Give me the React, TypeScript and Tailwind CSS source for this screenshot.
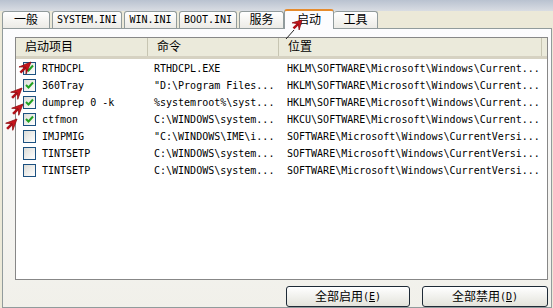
import React from 'react';

const rows = [
  { name: 'RTHDCPL', cmd: 'RTHDCPL.EXE', loc: 'HKLM\\SOFTWARE\\Microsoft\\Windows\\Current...', on: true },
  { name: '360Tray', cmd: '"D:\\Program Files...', loc: 'HKLM\\SOFTWARE\\Microsoft\\Windows\\Current...', on: true },
  { name: 'dumprep 0 -k', cmd: '%systemroot%\\syst...', loc: 'HKLM\\SOFTWARE\\Microsoft\\Windows\\Current...', on: true },
  { name: 'ctfmon', cmd: 'C:\\WINDOWS\\system...', loc: 'HKCU\\SOFTWARE\\Microsoft\\Windows\\Current...', on: true },
  { name: 'IMJPMIG', cmd: '"C:\\WINDOWS\\IME\\i...', loc: 'SOFTWARE\\Microsoft\\Windows\\CurrentVersi...', on: false },
  { name: 'TINTSETP', cmd: 'C:\\WINDOWS\\system...', loc: 'SOFTWARE\\Microsoft\\Windows\\CurrentVersi...', on: false },
  { name: 'TINTSETP', cmd: 'C:\\WINDOWS\\system...', loc: 'SOFTWARE\\Microsoft\\Windows\\CurrentVersi...', on: false },
];

const tabs = [
  { label: '一般', w: 'w-[48px]', size: 'text-[12px]' },
  { label: 'SYSTEM.INI', w: 'w-[70px]', size: 'text-[10px]' },
  { label: 'WIN.INI', w: 'w-[53px]', size: 'text-[10px]' },
  { label: 'BOOT.INI', w: 'w-[58px]', size: 'text-[10px]' },
  { label: '服务', w: 'w-[45px]', size: 'text-[12px]' },
];

function CheckBox({ on }: { on: boolean }) {
  return (
    <div className="w-[13px] h-[13px] border border-[#1c5180] bg-gradient-to-br from-[#dcdcd7] to-white flex items-center justify-center shrink-0">
      {on && (
        <svg width="9" height="9" viewBox="0 0 9 9">
          <path d="M1 4 L3.5 6.5 L8 1.5" fill="none" stroke="#21a121" strokeWidth="2" />
        </svg>
      )}
    </div>
  );
}

// red annotation arrow, tip at (x,y), pointing up-right
function Arrow({ x, y, len = 11 }: { x: number; y: number; len?: number }) {
  const d = [-0.7071, 0.7071];
  const n = [0.7071, 0.7071];
  const p = (a: number, b: number) => `${x + d[0] * a + n[0] * b},${y + d[1] * a + n[1] * b}`;
  return (
    <g>
      <line x1={x + d[0] * len * 0.6} y1={y + d[1] * len * 0.6} x2={x + d[0] * (len + 3)} y2={y + d[1] * (len + 3)} stroke="#b01018" strokeWidth="2.5" />
      <polygon points={`${x},${y} ${p(len, 5)} ${p(len * 0.6, 0)} ${p(len, -5)}`} fill="#c8141c" stroke="#8e0c10" strokeWidth="0.8" />
    </g>
  );
}

export default function App() {
  return (
    <div className="relative w-[553px] h-[308px] overflow-hidden bg-[#ece9d8] text-black font-['DejaVu_Sans_Mono','Noto_Sans_CJK_SC',monospace] text-[10px]">
      <div className="h-[11px] bg-gradient-to-b from-[#b9c2d0] to-[#d9dde3]" />

      {/* tab strip */}
      <div className="flex items-end h-[17px] pl-[2px] bg-[#ece9d8]">
        {tabs.map((t) => (
          <div
            key={t.label}
            className={`${t.w} ${t.size} h-[17px] mr-[2px] border border-b-0 border-[#919b9c] rounded-t-[3px] bg-gradient-to-b from-white to-[#ecebe6] flex items-center justify-center leading-none whitespace-nowrap`}
          >
            {t.label}
          </div>
        ))}
        <div className="relative z-10 w-[50px] h-[20px] -mb-[1px] -ml-[2px] border border-b-0 border-[#919b9c] border-t-2 border-t-[#e68b2c] rounded-t-[3px] bg-[#fcfcfe] flex items-center justify-center text-[12px] leading-none">
          启动
        </div>
        <div className="w-[44px] h-[17px] border border-b-0 border-l-0 border-[#919b9c] rounded-t-[3px] bg-gradient-to-b from-white to-[#ecebe6] flex items-center justify-center text-[12px] leading-none">
          工具
        </div>
      </div>

      {/* panel */}
      <div className="ml-[2px] w-[550px] h-[280px] border border-[#919b9c] bg-gradient-to-b from-[#fcfcfe] to-[#f1f0ea] pl-[12px] pt-[8px]">
        <div className="w-[533px] h-[243px] border border-[#878787] bg-white flex flex-col">
          <div className="flex h-[21px] bg-[#ebeadb] border-b-[3px] border-[#d6d2c2] text-[12px] shrink-0">
            <div className="w-[132px] pl-[9px] flex items-center border-r border-[#c7c5b2]">启动项目</div>
            <div className="w-[131px] pl-[9px] flex items-center border-r border-[#c7c5b2]">命令</div>
            <div className="w-[263px] pl-[9px] flex items-center border-r border-[#c7c5b2]">位置</div>
            <div className="flex-1" />
          </div>
          <div className="pt-[1px]">
            {rows.map((r, i) => (
              <div key={i} className="flex items-center h-[17px] whitespace-nowrap">
                <div className="w-[132px] flex items-center pl-[7px] gap-[6px]">
                  <CheckBox on={r.on} />
                  <span>{r.name}</span>
                </div>
                <div className="w-[131px] pl-[6px]">{r.cmd}</div>
                <div className="pl-[8px]">{r.loc}</div>
              </div>
            ))}
          </div>
        </div>

        <div className="flex justify-end gap-[12px] pr-[3px] pt-[6px]">
          <button className="w-[124px] h-[21px] rounded-[3px] border border-[#1e2a36] bg-gradient-to-b from-white to-[#e3e3db] text-[12px] flex items-center justify-center">
            全部启用<span className="text-[10px]">(<span className="underline">E</span>)</span>
          </button>
          <button className="w-[126px] h-[21px] rounded-[3px] border border-[#1e2a36] bg-gradient-to-b from-white to-[#e3e3db] text-[12px] flex items-center justify-center">
            全部禁用<span className="text-[10px]">(<span className="underline">D</span>)</span>
          </button>
        </div>
      </div>

      {/* annotation arrows */}
      <svg className="absolute left-0 top-0 z-20 pointer-events-none" width="553" height="308">
        <Arrow x={31} y={62} len={12} />
        <Arrow x={22} y={88} />
        <Arrow x={23} y={104} />
        <Arrow x={17} y={119} />
        <line x1="294" y1="30" x2="286" y2="39" stroke="#222" strokeWidth="1" />
        <Arrow x={302} y={20} len={9} />
      </svg>
    </div>
  );
}
